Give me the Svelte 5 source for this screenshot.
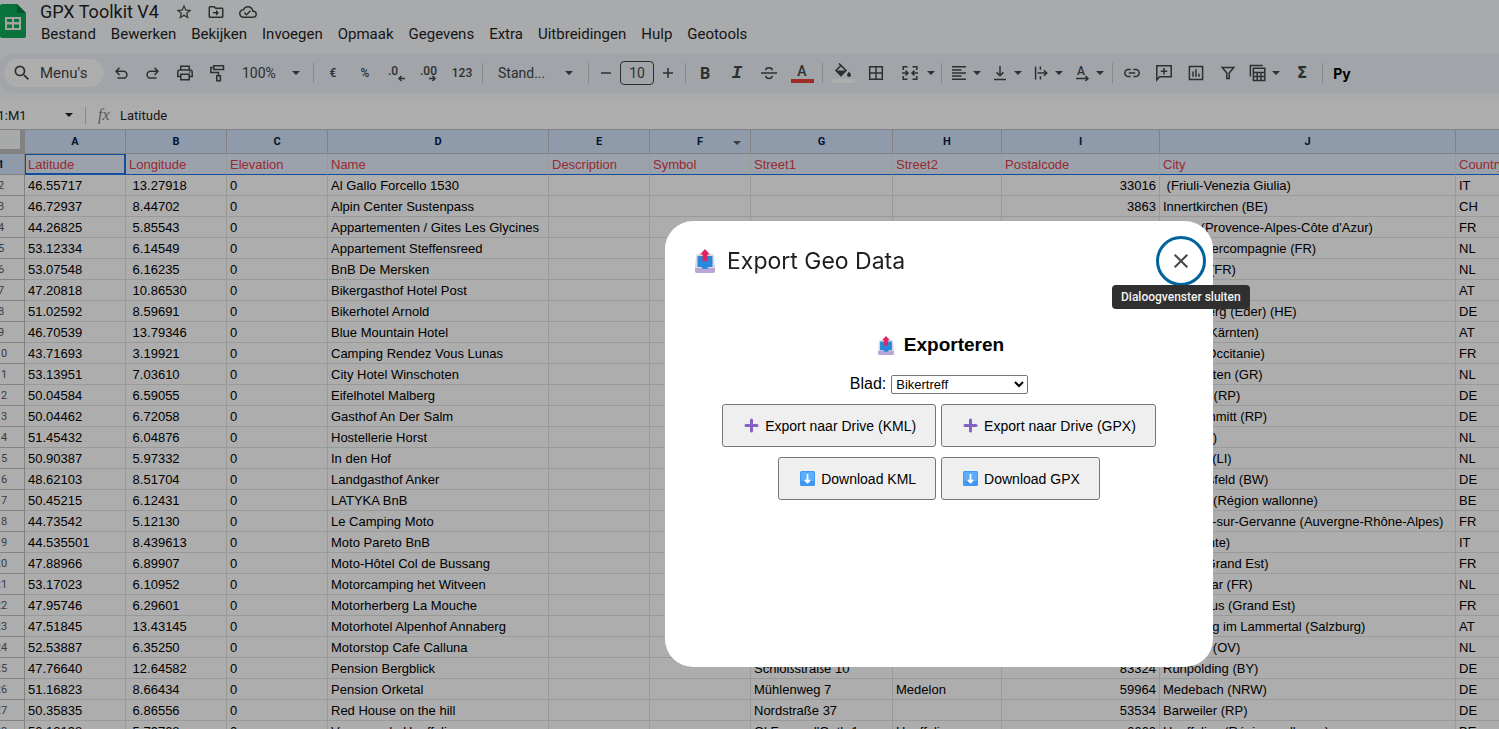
<script>
  const menus = ['Bestand', 'Bewerken', 'Bekijken', 'Invoegen', 'Opmaak', 'Gegevens', 'Extra', 'Uitbreidingen', 'Hulp', 'Geotools'];

  const columns = [
    { key: 'A', label: 'Latitude', width: 101 },
    { key: 'B', label: 'Longitude', width: 101 },
    { key: 'C', label: 'Elevation', width: 101 },
    { key: 'D', label: 'Name', width: 221 },
    { key: 'E', label: 'Description', width: 101 },
    { key: 'F', label: 'Symbol', width: 101, filter: true },
    { key: 'G', label: 'Street1', width: 142 },
    { key: 'H', label: 'Street2', width: 109 },
    { key: 'I', label: 'Postalcode', width: 158 },
    { key: 'J', label: 'City', width: 296 },
    { key: 'K', label: 'Country', width: 101 }
  ];

  // lat, lon, name, city, country, street1, street2, postal code
  const places = [
    ['46.55717', '13.27918', 'Al Gallo Forcello 1530', ' (Friuli-Venezia Giulia)', 'IT', '', '', '33016'],
    ['46.72937', '8.44702', 'Alpin Center Sustenpass', 'Innertkirchen (BE)', 'CH', '', '', '3863'],
    ['44.26825', '5.85543', 'Appartementen / Gites Les Glycines', "Digne (Provence-Alpes-Côte d'Azur)", 'FR'],
    ['53.12334', '6.14549', 'Appartement Steffensreed', 'Drachtstercompagnie (FR)', 'NL'],
    ['53.07548', '6.16235', 'BnB De Mersken', 'Ureterp (FR)', 'NL'],
    ['47.20818', '10.86530', 'Bikergasthof Hotel Post', 'Oetz', 'AT'],
    ['51.02592', '8.59691', 'Bikerhotel Arnold', 'Battenberg (Eder) (HE)', 'DE'],
    ['46.70539', '13.79346', 'Blue Mountain Hotel', 'Villach (Kärnten)', 'AT'],
    ['43.71693', '3.19921', 'Camping Rendez Vous Lunas', 'Lunas (Occitanie)', 'FR'],
    ['53.13951', '7.03610', 'City Hotel Winschoten', 'Winschoten (GR)', 'NL'],
    ['50.04584', '6.59055', 'Eifelhotel Malberg', 'Malberg (RP)', 'DE'],
    ['50.04462', '6.72058', 'Gasthof An Der Salm', 'Eisenschmitt (RP)', 'DE'],
    ['51.45432', '6.04876', 'Hostellerie Horst', 'Horst (LI)', 'NL'],
    ['50.90387', '5.97332', 'In den Hof', 'Heerlen (LI)', 'NL'],
    ['48.62103', '8.51704', 'Landgasthof Anker', 'Simmersfeld (BW)', 'DE'],
    ['50.45215', '6.12431', 'LATYKA BnB', 'Waimes (Région wallonne)', 'BE'],
    ['44.73542', '5.12130', 'Le Camping Moto', 'Beaufort-sur-Gervanne (Auvergne-Rhône-Alpes)', 'FR'],
    ['44.535501', '8.439613', 'Moto Pareto BnB', ' (Piemonte)', 'IT'],
    ['47.88966', '6.89907', 'Moto-Hôtel Col de Bussang', 'Urbès (Grand Est)', 'FR'],
    ['53.17023', '6.10952', 'Motorcamping het Witveen', 'Eastermar (FR)', 'NL'],
    ['47.95746', '6.29601', 'Motorherberg La Mouche', 'Fontenous (Grand Est)', 'FR'],
    ['47.51845', '13.43145', 'Motorhotel Alpenhof Annaberg', 'Annaberg im Lammertal (Salzburg)', 'AT'],
    ['52.53887', '6.35250', 'Motorstop Cafe Calluna', 'Ommen (OV)', 'NL'],
    ['47.76640', '12.64582', 'Pension Bergblick', 'Ruhpolding (BY)', 'DE', 'Schloßstraße 10', '', '83324'],
    ['51.16823', '8.66434', 'Pension Orketal', 'Medebach (NRW)', 'DE', 'Mühlenweg 7', 'Medelon', '59964'],
    ['50.35835', '6.86556', 'Red House on the hill', 'Barweiler (RP)', 'DE', 'Nordstraße 37', '', '53534'],
    ['50.13198', '5.79708', 'Vayamundo Houffalize', 'Houffalize (Région wallonne)', 'BE', "Ol Fosse d'Outh 1", 'Houffalize', '6660']
  ];

  const icons = {
    undo: 'M8.5 4.7 5 8.3l3.5 3.6M5 8.3h7.5a3.4 3.4 0 0 1 0 6.8H6.5',
    redo: 'M11.5 4.7 15 8.3l-3.5 3.6M15 8.3H7.5a3.4 3.4 0 0 0 0 6.8h6',
    print: 'M5.8 6.5V3.3h8.4v3.2M5.8 13.5h-3V9a2 2 0 0 1 2-2h10.4a2 2 0 0 1 2 2v4.5h-3M5.8 11.2h8.4v5.5H5.8zM14 9h1.4',
    paint: 'M6.8 2.8h9.7v3.6H6.8zM6.8 4.6H3.8v5H11.5v3M9.8 12.8h3.6v5H9.8z',
    minus: 'M5 10h10',
    plus: 'M5 10h10M10 5v10',
    strike: 'M2 10h16M6.8 7.2c0-3.4 6.4-3.4 6.4 0M6.8 12.8c0 3.6 6.4 3.6 6.4 0',
    borders: 'M3.7 3.7h12.6v12.6H3.7zM10 3.7v12.6M3.7 10h12.6',
    merge: 'M7.5 3.8H3.2V7M7.5 16.2H3.2V13M12.5 3.8h4.3V7M12.5 16.2h4.3V13M2 10h5.5M5.5 7.6 8 10l-2.5 2.4M18 10h-5.5M14.5 7.6 12 10l2.5 2.4',
    align: 'M3 3.8h14M3 6.9h9.5M3 10h14M3 13.1h9.5M3 16.2h14',
    valign: 'M10 3v9.6M6.6 9.4 10 12.8l3.4-3.4M4 16.4h12',
    wrap: 'M4.6 3.5v13M9.4 3.5v3.3M9.4 13.2v3.3M6.6 10h9M12.8 7.2 15.8 10l-3 2.8',
    link: 'M8.6 6.4H6.4a3.6 3.6 0 0 0 0 7.2h2.2M11.4 6.4h2.2a3.6 3.6 0 0 1 0 7.2h-2.2M6.8 10h6.4',
    comment: 'M2.8 17V2.8h14.4v11H5.6zM10 5v6.4M6.8 8.2h6.4',
    chart: 'M3.4 3.4h13.2v13.2H3.4zM7 8.4v5.4M10 6.2v7.6M13 10.8v3',
    filter: 'M4.2 4.4h11.6L11.2 10v5.6H8.8V10z',
    table: 'M2.4 13.5V2.4h12.4M5.4 5.2h11.4v12.2H5.4zM5.4 9.4h11.4M5.4 13.4h11.4M9.2 9.4v8M13 9.4v8'
  };

  let sheet = $state('Bikertreff');
  let open = $state(true);

  // cell text in column order
  function cells([lat, lon, name, city, country, street1 = '', street2 = '', postal = '']) {
    return [lat, '\u00a0' + lon, '0', name, '', '', street1, street2, postal, city.replace(/^ /, '\u00a0'), country];
  }
</script>

{#snippet icon(name)}
  <svg class="icon" viewBox="0 0 20 20" width="20" height="20" aria-hidden="true"><path d={icons[name]} /></svg>
{/snippet}

{#snippet tool(name, label)}
  <button class="tool" aria-label={label}>{@render icon(name)}</button>
{/snippet}

{#snippet split(name, label)}
  <button class="split" aria-label={label}>{@render icon(name)}<span class="caret"></span></button>
{/snippet}

{#snippet tray(width, height)}
  <svg {width} {height} viewBox="0 0 20 24" aria-hidden="true">
    <path d="M3 5h14q2 0 2 2l1 11v4q0 2-2 2H2q-2 0-2-2v-4L1 7q0-2 2-2z" fill="#dcd8ea" />
    <path d="M0 19h20v3q0 2-2 2H2q-2 0-2-2z" fill="#b8a6d6" />
    <path d="M3.500 7h13q1 0 1 1v10h-4l-1.500 2H8l-1.500-2h-4V8q0-1 1-1z" fill="#2b88d8" />
    <path d="M10 0l5 5.500h-2.600V12H7.600V5.500H5z" fill="#e0245e" />
  </svg>
{/snippet}

{#snippet download()}
  <svg width="15" height="15" viewBox="0 0 15 15" aria-hidden="true">
    <rect width="15" height="15" rx="1.5" fill="#3f97f2" />
    <rect x="1" y="1" width="13" height="9" rx="1" fill="#5cadfa" />
    <path d="M7.500 3v8.500M5 9l2.500 2.500L10 9" fill="none" stroke="#fff" stroke-width="1.800" />
  </svg>
{/snippet}

{#snippet heavyPlus()}
  <svg width="15" height="15" viewBox="0 0 15 15" aria-hidden="true">
    <path d="M7.500 2v11M2 7.500h11" stroke="#8661c5" stroke-width="3" stroke-linecap="round" />
  </svg>
{/snippet}

<div class="app">
  <header class="top">
    <svg class="logo" viewBox="0 0 26 34" width="26" height="34" aria-hidden="true">
      <path d="M2 0h15l9 9v23q0 2-2 2H2q-2 0-2-2V2q0-2 2-2z" fill="#0fa958" />
      <path d="M17 0l9 9h-9z" fill="#087f43" />
      <path d="M5 13h16v13H5zM7 15v3h5v-3zM14 15v3h5v-3zM7 20.500v3.500h5v-3.500zM14 20.500v3.500h5v-3.500z" fill="#f1f1f1" fill-rule="evenodd" />
    </svg>
    <div>
      <div class="title-row">
        <h1>GPX Toolkit V4</h1>
        <button class="doc-action" aria-label="Ster">
          <svg viewBox="0 0 24 24" width="18" height="18"><path d="M22 9.240l-7.190-.620L12 2 9.190 8.630 2 9.240l5.460 4.730L5.820 21 12 17.270 18.180 21l-1.630-7.030L22 9.240zM12 15.400l-3.760 2.270 1-4.280-3.320-2.880 4.380-.380L12 6.100l1.710 4.040 4.380.380-3.320 2.880 1 4.280L12 15.400z" /></svg>
        </button>
        <button class="doc-action" aria-label="Verplaatsen">
          <svg viewBox="0 0 24 24" width="20" height="18"><path d="M20 6h-8l-2-2H4c-1.100 0-2 .900-2 2v12c0 1.100.900 2 2 2h16c1.100 0 2-.900 2-2V8c0-1.100-.900-2-2-2zm0 12H4V6h5.170l2 2H20v10zm-8-1l4-4-4-4v3H8v2h4v3z" /></svg>
        </button>
        <button class="doc-action" aria-label="Documentstatus">
          <svg viewBox="0 0 24 24" width="18" height="18"><path d="M19.350 10.040C18.670 6.590 15.640 4 12 4 9.110 4 6.610 5.640 5.360 8.040 2.350 8.360 0 10.900 0 14c0 3.310 2.690 6 6 6h13c2.760 0 5-2.240 5-5 0-2.640-2.050-4.780-4.650-4.960zM19 18H6c-2.210 0-4-1.790-4-4 0-2.050 1.530-3.760 3.560-3.970l1.070-.110.500-.950C8.080 7.140 9.940 6 12 6c2.620 0 4.880 1.860 5.390 4.430l.300 1.500 1.530.110c1.560.100 2.780 1.410 2.780 2.960 0 1.650-1.350 3-3 3zm-9-3.820l-2.090-2.090L6.500 13.500 10 17l6.010-6.010-1.410-1.410z" /></svg>
        </button>
      </div>
      <nav class="menus">
        {#each menus as menu}
          <button>{menu}</button>
        {/each}
      </nav>
    </div>
  </header>

  <div class="toolbar" role="toolbar" aria-label="Werkbalk">
    <button class="search">
      <svg viewBox="0 0 24 24" width="20" height="20" aria-hidden="true"><path d="M15.500 14h-.790l-.280-.270A6.471 6.471 0 0 0 16 9.500 6.500 6.500 0 1 0 9.500 16c1.610 0 3.090-.590 4.230-1.570l.270.280v.790l5 4.990L20.490 19l-4.990-5zm-6 0C7.010 14 5 11.990 5 9.500S7.010 5 9.500 5 14 7.010 14 9.500 11.990 14 9.500 14z" /></svg>
      Menu's
    </button>
    {@render tool('undo', 'Ongedaan maken')}
    {@render tool('redo', 'Opnieuw')}
    {@render tool('print', 'Afdrukken')}
    {@render tool('paint', 'Opmaak kopiëren')}
    <button class="zoom">100% <span class="caret"></span></button>
    <span class="divider"></span>
    <button class="tool small">€</button>
    <button class="tool small">%</button>
    <button class="tool" aria-label="Minder decimalen">
      <svg class="icon" viewBox="0 0 20 20" width="20" height="20">
        <text x="1" y="12">.0</text>
        <path d="M18 15.500h-6M14.500 13 12 15.500l2.500 2.500" />
      </svg>
    </button>
    <button class="tool" aria-label="Meer decimalen">
      <svg class="icon" viewBox="0 0 20 20" width="20" height="20">
        <text x="1" y="12">.00</text>
        <path d="M10 15.500h6M13.500 13l2.500 2.500-2.500 2.500" />
      </svg>
    </button>
    <button class="tool small roomy">123</button>
    <span class="divider"></span>
    <button class="font">Stand... <span class="caret"></span></button>
    <span class="divider"></span>
    <button class="step" aria-label="Lettergrootte verkleinen">{@render icon('minus')}</button>
    <input class="size" value="10" aria-label="Lettergrootte" />
    <button class="step" aria-label="Lettergrootte vergroten">{@render icon('plus')}</button>
    <span class="divider"></span>
    <button class="tool bold">B</button>
    <button class="tool italic">I</button>
    {@render tool('strike', 'Doorhalen')}
    <button class="tool roomy swatch red">A</button>
    <span class="divider"></span>
    <button class="tool roomy swatch white" aria-label="Opvulkleur">
      <svg viewBox="0 0 20 16" width="20" height="16">
        <path d="M6 .500 13 7.500 8 12.500 3 7.500 8 2.500" fill="none" stroke="currentColor" stroke-width="1.600" />
        <path d="M3 7.500h10l-5 5z" fill="currentColor" />
        <path d="M16 8.500q2 2.600 2 3.600a2 2 0 0 1-4 0q0-1 2-3.600z" fill="currentColor" />
      </svg>
    </button>
    {@render tool('borders', 'Randen')}
    <button class="split wide" aria-label="Cellen samenvoegen">{@render icon('merge')}<span class="caret"></span></button>
    <span class="divider"></span>
    {@render split('align', 'Horizontaal uitlijnen')}
    {@render split('valign', 'Verticaal uitlijnen')}
    {@render split('wrap', 'Tekstterugloop')}
    <button class="split" aria-label="Tekstrotatie">
      <svg class="icon" viewBox="0 0 20 20" width="20" height="20">
        <text x="5" y="12">A</text>
        <path d="M4 15.500h11.500M13.500 13l2.500 2.500-2.500 2.500" />
      </svg>
      <span class="caret"></span>
    </button>
    <span class="divider"></span>
    {@render tool('link', 'Link invoegen')}
    {@render tool('comment', 'Opmerking invoegen')}
    {@render tool('chart', 'Diagram invoegen')}
    {@render tool('filter', 'Filter maken')}
    {@render split('table', 'Tabelweergaven')}
    <button class="tool roomy sigma">Σ</button>
    <span class="divider"></span>
    <button class="tool py">Py</button>
  </div>

  <div class="formula-bar">
    <button class="name-box">A1:M1 <span class="caret"></span></button>
    <span class="fx">fx</span>
    <input value="Latitude" aria-label="Formulebalk" />
  </div>

  <table>
    <colgroup>
      <col class="rownum-col" />
      {#each columns as col}
        <col style="width: {col.width}px" />
      {/each}
    </colgroup>
    <thead>
      <tr>
        <td class="corner"></td>
        {#each columns as col}
          <th scope="col">{col.key}{#if col.filter}<span class="caret"></span>{/if}</th>
        {/each}
      </tr>
    </thead>
    <tbody>
      <tr class="selected">
        <th scope="row">1</th>
        {#each columns as col, i}
          <td class:active={i === 0}>{col.label}</td>
        {/each}
      </tr>
      {#each places as place, row}
        <tr>
          <th scope="row">{row + 2}</th>
          {#each cells(place) as text, i}
            <td class:number={i === 8}>{text}</td>
          {/each}
        </tr>
      {/each}
    </tbody>
  </table>
</div>

{#if open}
  <div class="backdrop"></div>
  <div class="dialog" role="dialog" aria-labelledby="dialog-title">
    <div class="dialog-head">
      {@render tray(20, 24)}
      <h2 id="dialog-title">Export Geo Data</h2>
      <button class="close" aria-label="Dialoogvenster sluiten" onclick={() => (open = false)}>
        <svg viewBox="0 0 24 24" width="24" height="24"><path d="M5.700 5.700l12.600 12.600M18.300 5.700 5.700 18.300" fill="none" stroke="#444746" stroke-width="2" /></svg>
      </button>
      <span class="tooltip" role="tooltip">Dialoogvenster sluiten</span>
    </div>
    <div class="dialog-body">
      <h3>{@render tray(16, 19)} Exporteren</h3>
      <div class="field">
        <label for="sheet">Blad:</label>
        <select id="sheet" bind:value={sheet}>
          <option>Bikertreff</option>
        </select>
      </div>
      <div class="actions">
        <button>{@render heavyPlus()} Export naar Drive (KML)</button>
        <button>{@render heavyPlus()} Export naar Drive (GPX)</button>
      </div>
      <div class="actions">
        <button>{@render download()} Download KML</button>
        <button>{@render download()} Download GPX</button>
      </div>
    </div>
  </div>
{/if}

<style>
  :global(body) {
    margin: 0;
    overflow: hidden;
  }

  /* the page is scrolled a little to the right */
  .app {
    height: 100vh;
    margin-left: -22px;
    overflow: hidden;
    background: #f9fbfd;
    color: #1f1f1f;
    font-family: Roboto, sans-serif;
    font-size: 14px;
  }

  button, input {
    padding: 0;
    border: none;
    background: none;
    color: inherit;
    font: inherit;
  }

  .top {
    display: flex;
    gap: 14px;
    height: 53px;
    padding-left: 22px;
    box-sizing: border-box;
  }

  .logo {
    margin-top: 4px;
  }

  .title-row {
    display: flex;
    align-items: center;
    height: 23px;
  }

  h1 {
    width: 136px;
    margin: 0;
    font-size: 18px;
    font-weight: 400;
    white-space: nowrap;
  }

  .doc-action {
    display: flex;
    justify-content: center;
    width: 32px;
    fill: #444746;
  }

  .doc-action:first-of-type {
    margin-left: -8px;
  }

  .menus {
    display: flex;
    gap: 15px;
    height: 22px;
    padding-left: 1px;
    font-size: 15px;
  }

  .toolbar {
    display: flex;
    align-items: center;
    height: 40px;
    margin-bottom: 8px;
    padding-left: 9px;
    margin-left: 17px;
    border-radius: 20px 0 0 20px;
    background: #edf2fa;
    color: #444746;
  }

  .toolbar > * {
    flex: none;
  }

  .search {
    display: flex;
    align-items: center;
    gap: 8px;
    width: 100px;
    height: 28px;
    margin-right: 1px;
    padding-left: 8px;
    border-radius: 14px;
    background: #fff;
    fill: #444746;
    font-size: 15px;
  }

  .icon {
    fill: none;
    stroke: currentColor;
    stroke-width: 1.5;
  }

  .icon text {
    fill: currentColor;
    stroke: none;
    font-size: 12px;
    font-weight: 500;
  }

  .tool, .split, .step {
    display: flex;
    align-items: center;
    justify-content: center;
    width: 32px;
    height: 28px;
  }

  .tool.roomy {
    width: 34px;
  }

  .caret {
    width: 0;
    border: 4px solid transparent;
    border-top-color: currentColor;
    border-bottom: none;
  }

  .split {
    width: 36px;
    margin: 0 3px 0 2px;
    gap: 4px;
  }

  .split.wide {
    gap: 7px;
    width: 46px;
    margin: 0;
    padding-left: 5px;
  }

  .step {
    width: 28px;
  }

  .small {
    font-size: 12px;
    font-weight: 500;
  }

  .zoom, .font {
    display: flex;
    align-items: center;
    justify-content: space-between;
    width: 77px;
    padding: 0 10px 0 9px;
    box-sizing: border-box;
  }

  .font {
    width: 99px;
    padding: 0 12px;
  }

  .divider {
    width: 1px;
    height: 20px;
    margin: 0 3px;
    background: #c7c7c7;
  }

  .size {
    width: 34px;
    height: 24px;
    border: 1px solid #444746;
    border-radius: 4px;
    box-sizing: border-box;
    text-align: center;
  }

  .bold {
    font-size: 16px;
    font-weight: 700;
  }

  .italic {
    font: italic bold 18px "Liberation Mono", monospace;
  }

  .swatch {
    flex-direction: column;
    font-weight: 500;
    line-height: 16px;
  }

  .swatch::after {
    content: "";
    width: 23px;
    height: 4px;
  }

  .red::after {
    background: #ea4335;
  }

  .white::after {
    background: #fff;
  }

  .sigma {
    font: bold 15px "DejaVu Sans", sans-serif;
  }

  .py {
    color: #000;
    font: 700 14px Inter, sans-serif;
  }

  .formula-bar {
    display: flex;
    align-items: center;
    height: 28px;
    padding-left: 11px;
    background: #fff;
    font-size: 13px;
  }

  .name-box {
    display: flex;
    align-items: center;
    justify-content: space-between;
    width: 97px;
    height: 17px;
    padding-right: 12px;
    border-right: 1px solid #c7c7c7;
  }

  .fx {
    width: 22px;
    padding-left: 12px;
    color: #80868b;
    font: italic 16px "Liberation Serif", serif;
  }

  .formula-bar input {
    flex: 1;
  }

  table {
    width: 1000px;
    border-top: 1px solid #c0c0c0;
    border-spacing: 0;
    table-layout: fixed;
    background: #fff;
    color: #000;
    font: 13px "Liberation Sans", Arial, sans-serif;
  }

  .rownum-col {
    width: 47px;
  }

  td, th {
    height: 20px;
    padding: 0 3px;
    border-right: 1px solid #e2e3e3;
    border-bottom: 1px solid #e2e3e3;
    overflow: hidden;
    white-space: nowrap;
  }

  th {
    padding: 0;
    border-color: #c0c0c0;
    color: #575b5f;
    font: 11px Roboto, sans-serif;
  }

  thead th {
    position: relative;
    height: 23px;
    background: #d3e3fd;
    color: #041e49;
    font-weight: 700;
  }

  thead .caret {
    position: absolute;
    right: 9px;
    top: 11px;
    color: #575b5f;
  }

  .corner {
    padding: 0;
    border-right: 5px solid #c0c0c0;
    border-bottom: 5px solid #c0c0c0;
    height: 19px;
    background: #f8f9fa;
  }

  .selected td {
    border-bottom-color: #1a73e8;
    background: #e6effd;
    color: #e0404a;
  }

  .selected th {
    background: #d3e3fd;
    color: #041e49;
    font-weight: 700;
  }

  .selected .active {
    border-color: #1a73e8;
    box-shadow: inset 0 0 0 1px #1a73e8;
  }

  .number {
    text-align: right;
  }

  .backdrop {
    position: fixed;
    inset: 0;
    background: rgba(0, 0, 0, 0.32);
  }

  .dialog {
    position: absolute;
    top: 221px;
    left: 665px;
    width: 548px;
    min-height: 446px;
    border-radius: 28px;
    background: #fff;
    font: 16px "Liberation Sans", Arial, sans-serif;
  }

  .dialog-head {
    position: relative;
    display: flex;
    align-items: center;
    gap: 12px;
    padding: 15px 7px 15px 30px;
  }

  h2 {
    flex: 1;
    margin: 0;
    color: #1f1f1f;
    font: 400 23px Inter, sans-serif;
  }

  .close {
    display: flex;
    align-items: center;
    justify-content: center;
    width: 50px;
    height: 50px;
    border: 3px solid #00639b;
    border-radius: 50%;
    box-sizing: border-box;
  }

  .tooltip {
    position: absolute;
    top: 64px;
    left: 447px;
    padding: 0 9px;
    border-radius: 4px;
    background: #303030;
    color: #f2f2f2;
    font: 500 12px/24px Roboto, sans-serif;
    white-space: nowrap;
  }

  .dialog-body {
    padding-top: 33px;
  }

  h3 {
    display: flex;
    align-items: center;
    justify-content: center;
    gap: 10px;
    margin: 0 0 18px;
    padding-left: 4px;
    font-size: 19px;
    line-height: 22px;
  }

  .field {
    display: flex;
    align-items: center;
    justify-content: center;
    gap: 5px;
    height: 20px;
    margin-bottom: 10px;
  }

  select {
    width: 137px;
    height: 19px;
    border: 1px solid #767676;
    border-radius: 2px;
    background: #fff;
    color: #000;
    font: 13px "Liberation Sans", Arial, sans-serif;
  }

  .actions {
    display: flex;
    justify-content: center;
    gap: 5px;
    margin-bottom: 10px;
  }

  .actions button {
    display: flex;
    align-items: center;
    gap: 6px;
    height: 43px;
    padding: 0 19px 0 21px;
    border: 1px solid #767676;
    border-radius: 3px;
    background: #efefef;
    color: #000;
    font-size: 14px;
  }
</style>
